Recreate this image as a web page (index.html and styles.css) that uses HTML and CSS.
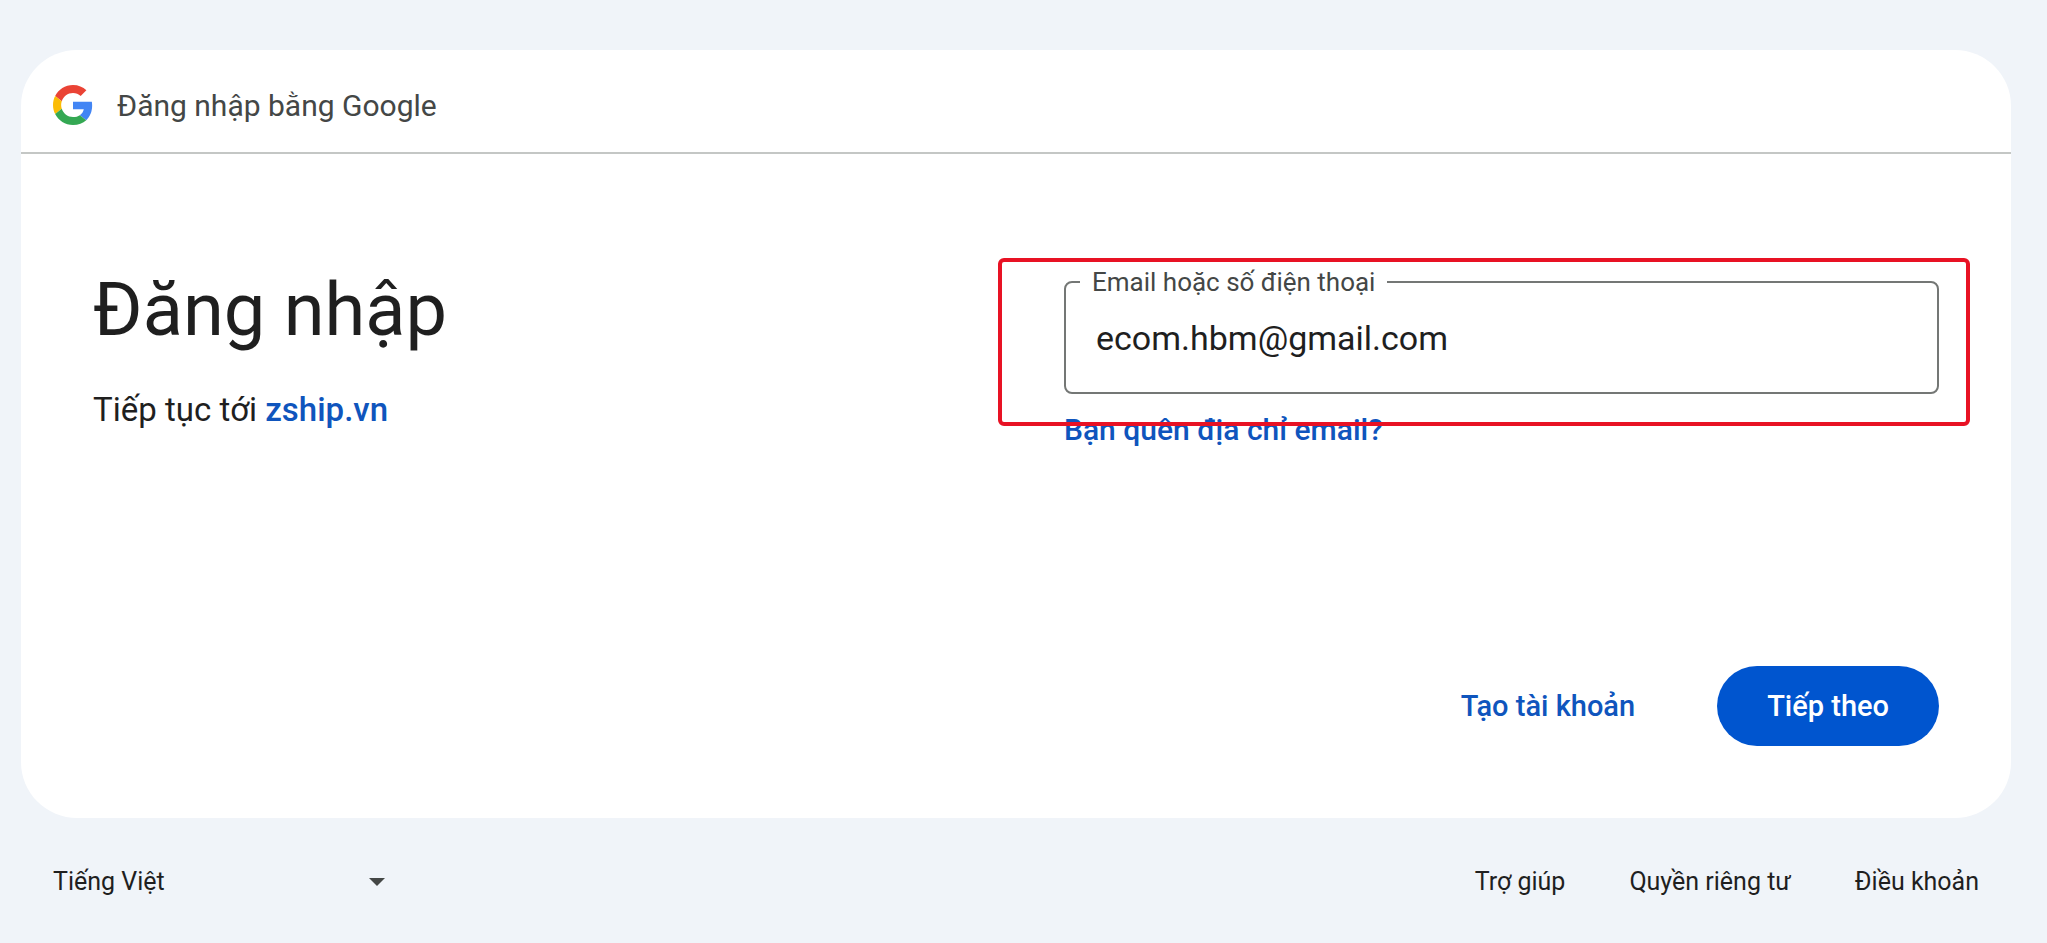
FILE: index.html
```html
<!DOCTYPE html>
<html lang="vi">
<head>
    <meta charset="UTF-8">
    <meta name="viewport" content="width=device-width, initial-scale=1.0">
    <title>Đăng nhập</title>
    <link rel="stylesheet" href="styles.css">
</head>
<body>
    <main class="card">
        <header class="card-header">
            <svg class="logo" viewBox="0 0 48 48" aria-hidden="true">
                <path fill="#EA4335" d="M24 9.5c3.54 0 6.71 1.22 9.21 3.6l6.85-6.85C35.9 2.38 30.47 0 24 0 14.62 0 6.51 5.38 2.56 13.22l7.98 6.19C12.43 13.72 17.74 9.5 24 9.5z"/>
                <path fill="#4285F4" d="M46.98 24.55c0-1.57-.15-3.09-.38-4.55H24v9.02h12.94c-.58 2.96-2.26 5.48-4.78 7.18l7.73 6c4.51-4.18 7.09-10.36 7.09-17.65z"/>
                <path fill="#FBBC05" d="M10.53 28.59c-.48-1.45-.76-2.99-.76-4.59s.27-3.14.76-4.59l-7.98-6.19C.92 16.46 0 20.12 0 24c0 3.88.92 7.54 2.56 10.78l7.97-6.19z"/>
                <path fill="#34A853" d="M24 48c6.48 0 11.93-2.13 15.89-5.81l-7.73-6c-2.15 1.45-4.92 2.3-8.16 2.3-6.26 0-11.57-4.22-13.47-9.91l-7.98 6.19C6.51 42.62 14.62 48 24 48z"/>
            </svg>
            <span>Đăng nhập bằng Google</span>
        </header>
        <div class="card-body">
            <div class="intro">
                <h1>Đăng nhập</h1>
                <p>Tiếp tục tới <a href="#">zship.vn</a></p>
            </div>
            <form class="login-form">
                <div class="field-area">
                    <fieldset class="field">
                        <legend><label for="email">Email hoặc số điện thoại</label></legend>
                        <input type="text" id="email" name="email" value="ecom.hbm@gmail.com">
                    </fieldset>
                    <div class="highlight"></div>
                </div>
                <a class="forgot" href="#">Bạn quên địa chỉ email?</a>
                <div class="actions">
                    <button type="button" class="create-btn">Tạo tài khoản</button>
                    <button type="button" class="next-btn">Tiếp theo</button>
                </div>
            </form>
        </div>
    </main>
    <footer class="footer">
        <div class="language">
            <select id="language" aria-label="Tiếng Việt">
                <option>Tiếng Việt</option>
            </select>
            <svg class="arrow" viewBox="0 0 16 8" aria-hidden="true"><path fill="#444746" d="M0 0h16l-8 8z"/></svg>
        </div>
        <nav class="links">
            <a href="#">Trợ giúp</a>
            <a href="#">Quyền riêng tư</a>
            <a href="#">Điều khoản</a>
        </nav>
    </footer>
</body>
</html>
```
FILE: styles.css
```css
* {
    box-sizing: border-box;
}
body {
    margin: 0;
    padding: 50px 36px 0 21px;
    font-family: Roboto, Arial, sans-serif;
    color: #1f1f1f;
    background-color: #f0f4f9;
}
a {
    color: #0f55bd;
    text-decoration: none;
    font-weight: 500;
}
button, input, select {
    font-family: inherit;
    color: inherit;
}
.card {
    background: white;
    border-radius: 56px;
}
.card-header {
    display: flex;
    align-items: center;
    gap: 24px;
    height: 104px;
    padding: 8px 32px 0;
    border-bottom: 2px solid #c4c7c5;
    font-size: 30px;
    color: #444746;
}
.logo {
    width: 40px;
    height: 40px;
}
.card-body {
    display: grid;
    grid-template-columns: 1fr 1fr;
    gap: 96px;
    padding: 112px 72px 72px;
}
.intro h1 {
    margin: 0;
    font-size: 74px;
    font-weight: 400;
    line-height: 88px;
}
.intro p {
    margin: 36px 0 0;
    font-size: 33px;
    line-height: 40px;
}
.login-form {
    display: flex;
    flex-direction: column;
    align-items: flex-start;
}
.field-area {
    position: relative;
    width: 100%;
}
.field {
    height: 128px;
    margin: 0;
    padding: 16px 30px 0;
    border: 2px solid #747775;
    border-radius: 8px;
}
.field legend {
    margin-left: -16px;
    padding: 0 12px;
    font-size: 26px;
    line-height: 32px;
    color: #444746;
}
.field input {
    width: 100%;
    padding: 0;
    border: none;
    outline: none;
    background: none;
    font-size: 34px;
    line-height: 48px;
    height: 48px;
}
/* red frame around the email field */
.highlight {
    position: absolute;
    top: -8px;
    right: -31px;
    bottom: -32px;
    left: -66px;
    border: 4px solid #e81224;
    border-radius: 6px;
    pointer-events: none;
}
.forgot {
    margin-top: 18px;
    font-size: 30px;
    line-height: 36px;
}
.actions {
    display: flex;
    align-self: flex-end;
    gap: 32px;
    margin-top: 218px;
}
.actions button {
    height: 80px;
    padding: 0 50px;
    border: none;
    border-radius: 40px;
    font-size: 29px;
    font-weight: 500;
    cursor: pointer;
}
.actions .create-btn {
    background: none;
    color: #0f55bd;
}
.actions .next-btn {
    background-color: #0055cf;
    color: white;
}
.footer {
    display: flex;
    justify-content: space-between;
    align-items: center;
    padding: 48px 32px 0;
    font-size: 25px;
    line-height: 32px;
}
.language {
    display: grid;
    align-items: center;
    width: 332px;
}
.language select {
    grid-area: 1 / 1;
    appearance: none;
    padding: 0;
    border: none;
    background: none;
    font-size: 25px;
    line-height: 32px;
}
.arrow {
    grid-area: 1 / 1;
    justify-self: end;
    width: 16px;
    height: 8px;
    pointer-events: none;
}
.links {
    display: flex;
    gap: 64px;
}
.links a {
    color: #1f1f1f;
    font-weight: 400;
}
```
